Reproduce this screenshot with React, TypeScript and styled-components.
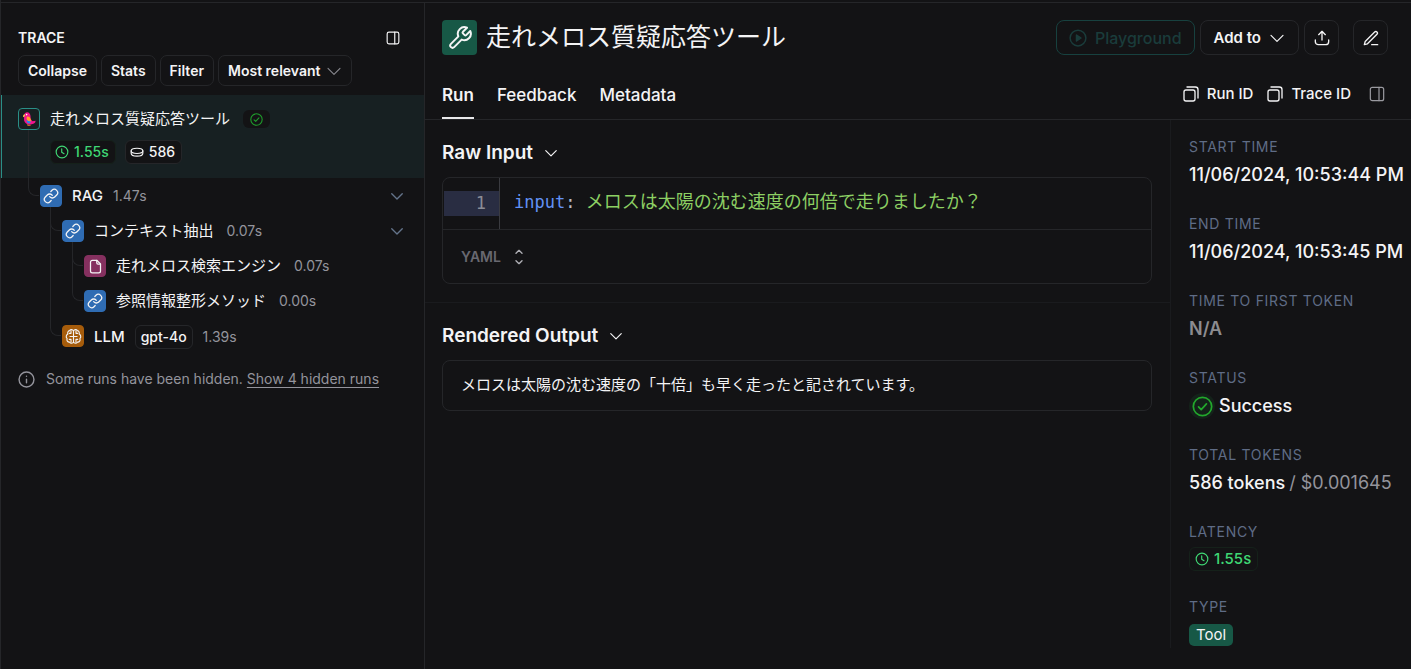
import React from 'react';
import styled, { createGlobalStyle } from 'styled-components';

const c = {
  bg: '#131315',
  line: '#252629',
  faint: '#1a1b1e',
  text: '#f4f4f5',
  muted: '#94949c',
  slate: '#5f6c86',
  green: '#3fd774',
  teal: '#2a8f87',
};

const GlobalStyle = createGlobalStyle`
  *, *::before, *::after { box-sizing: border-box; }
  body {
    margin: 0;
    background: ${c.bg};
    color: ${c.text};
    font-family: Inter, "Noto Sans CJK JP", sans-serif;
    font-size: 15px;
    line-height: 22px;
  }
  button, select { font: inherit; color: inherit; }
  h1, h2, dl, dd, p, ul { margin: 0; padding: 0; }
  ul { list-style: none; }
`;

/* ---------- icons ---------- */

type IconProps = { size?: number; stroke?: number; color?: string; children?: React.ReactNode };

const Svg = styled.svg`
  display: block;
  flex: none;
`;

const Icon = ({ size = 16, stroke = 2, color = 'currentColor', children }: IconProps) => (
  <Svg
    width={size}
    height={size}
    viewBox="0 0 24 24"
    fill="none"
    stroke={color}
    strokeWidth={stroke}
    strokeLinecap="round"
    strokeLinejoin="round"
    aria-hidden="true"
  >
    {children}
  </Svg>
);

const PanelIcon = (p: IconProps) => (
  <Icon {...p}>
    <rect x="2" y="2" width="20" height="20" rx="3" />
    <path d="M15 2v20" />
  </Icon>
);

const ChevronIcon = (p: IconProps) => (
  <Icon {...p}>
    <path d="M3 8l9 9 9-9" />
  </Icon>
);

const ClockIcon = (p: IconProps) => (
  <Icon {...p}>
    <circle cx="12" cy="12" r="10" />
    <path d="M11.500 6.500v6l4 2.500" />
  </Icon>
);

const CheckCircleIcon = (p: IconProps) => (
  <Icon {...p}>
    <circle cx="12" cy="12" r="10.500" />
    <path d="M7.500 12.500l3 3 6-6.500" />
  </Icon>
);

const CoinsIcon = (p: IconProps) => (
  <Icon {...p}>
    <ellipse cx="12" cy="10" rx="10" ry="4.500" />
    <path d="M2 10v4c0 2.800 4.500 5 10 5s10-2.200 10-5v-4" />
  </Icon>
);

const LinkIcon = (p: IconProps) => (
  <Icon {...p}>
    <path d="M10 13a5 5 0 0 0 7.540.540l3-3a5 5 0 0 0-7.070-7.070l-1.720 1.710" />
    <path d="M14 11a5 5 0 0 0-7.540-.540l-3 3a5 5 0 0 0 7.070 7.070l1.710-1.710" />
  </Icon>
);

const FileIcon = (p: IconProps) => (
  <Icon {...p}>
    <path d="M14 2H7a3 3 0 0 0-3 3v14a3 3 0 0 0 3 3h10a3 3 0 0 0 3-3V8z" />
    <path d="M14 2v4a2 2 0 0 0 2 2h4" />
  </Icon>
);

const BrainIcon = (p: IconProps) => (
  <Icon {...p}>
    <path d="M12 4v16M12 4.500a3 3 0 0 0-5.500-.800A3.500 3.500 0 0 0 4 8.500a4 4 0 0 0-1 6.500 3.500 3.500 0 0 0 3.500 5A3 3 0 0 0 12 19.500a3 3 0 0 0 5.500.500 3.500 3.500 0 0 0 3.500-5 4 4 0 0 0-1-6.500 3.500 3.500 0 0 0-2.500-4.800A3 3 0 0 0 12 4.500" />
    <path d="M8.500 4v3.500H6M8.500 20v-4H6M12 12H7M15.500 4v3.500H18M15.500 20v-4H18M12 12h5" />
  </Icon>
);

const WrenchIcon = (p: IconProps) => (
  <Icon {...p}>
    <path d="M14.700 6.300a1 1 0 0 0 0 1.400l1.600 1.600a1 1 0 0 0 1.400 0l3.770-3.770a6 6 0 0 1-7.940 7.940l-6.910 6.910a2.120 2.120 0 0 1-3-3l6.910-6.910a6 6 0 0 1 7.940-7.940l-3.760 3.760z" />
  </Icon>
);

const PlayIcon = (p: IconProps) => (
  <Icon {...p}>
    <circle cx="12" cy="12" r="10.500" />
    <path d="M10 8l6 4-6 4z" fill="currentColor" />
  </Icon>
);

const UploadIcon = (p: IconProps) => (
  <Icon {...p}>
    <path d="M2 15v2.500A4.500 4.500 0 0 0 6.500 22h11a4.500 4.500 0 0 0 4.500-4.500V15" />
    <path d="M12 15V2M7 7l5-5 5 5" />
  </Icon>
);

const EditIcon = (p: IconProps) => (
  <Icon {...p}>
    <path d="M13 22h9" />
    <path d="M2 22l1.300-4.700L17.500 3a2.300 2.300 0 0 1 3.400 3.400L6.700 20.700z" />
  </Icon>
);

const CopyIcon = (p: IconProps) => (
  <Icon {...p}>
    <rect x="1.500" y="6" width="16.500" height="16.500" rx="3" />
    <path d="M6 1.500h12.500a4 4 0 0 1 4 4V18" />
  </Icon>
);

const InfoIcon = (p: IconProps) => (
  <Icon {...p}>
    <circle cx="12" cy="12" r="10.500" />
    <path d="M12 11.500v5M12 7.500v.010" />
  </Icon>
);

const SortIcon = (p: IconProps) => (
  <Icon {...p}>
    <path d="M7.500 6.500L12 2l4.500 4.500M7.500 17.500L12 22l4.500-4.500" />
  </Icon>
);

const ParrotIcon = () => (
  <Svg width="14" height="14" viewBox="0 0 14 14" aria-hidden="true">
    <path d="M2.200 3.500C2.200 1.400 3.600.300 5.200.300c1.800 0 3 1.300 3.200 3.200.200 1.500.300 2.500.100 3.500l2 2.300 3-.500c.400 1.700-1.400 3.200-3.700 3.500-1.200.600-2.600.600-3.800.200C3.300 11.700 1.700 9 2 6.500z" fill="#f2148c" />
    <path d="M2.800 2.200C1.300 2.400.700 3.800 1.200 5.300l2-1.200z" fill="#ffc04a" />
    <path d="M5 4.600c2.300-.300 4.300 1.500 4 5L5.800 9C4.500 8 4.200 6 5 4.600z" fill="#ff9f2a" />
    <path d="M4.500 7.800c1 1.200 2.500 1.700 4.500 1.700l-1.300 2c-2 .200-3.400-1.500-3.200-3.700z" fill="#1f8df0" />
    <path d="M5.800 12v1.600h2.800" stroke="#c9741f" strokeWidth="1" fill="none" />
    <circle cx="4.600" cy="2.600" r=".800" fill="#fff" />
  </Svg>
);

/* ---------- frame ---------- */

const Frame = styled.div`
  display: flex;
  min-height: 100vh;
  border-left: 1px solid ${c.line};
  background: linear-gradient(${c.line}, ${c.line}) 0 2px / 100% 1px no-repeat;
  padding-top: 3px;
`;

const Sidebar = styled.aside`
  flex: 0 0 30%;
  min-width: 0;
`;

const Main = styled.main`
  flex: 1;
  min-width: 0;
  display: flex;
  flex-direction: column;
  border-left: 1px solid ${c.line};
`;

/* ---------- sidebar ---------- */

const SidebarHead = styled.div`
  display: flex;
  align-items: center;
  justify-content: space-between;
  padding: 24px 24px 0 17px;
`;

const SidebarTitle = styled.h2`
  font-size: 14px;
  font-weight: 600;
`;

const IconButton = styled.button<{ $dim?: boolean; $apart?: boolean }>`
  display: flex;
  padding: 0;
  border: 0;
  background: none;
  color: ${(p) => (p.$dim ? '#9a9aa0' : c.text)};
  cursor: pointer;
  ${(p) => p.$apart && 'margin-left: 4px;'}
`;

const Filters = styled.div`
  display: flex;
  gap: 4px;
  padding: 6px 17px 9px;
`;

const SmallButton = styled.button`
  display: flex;
  align-items: center;
  gap: 6px;
  height: 31px;
  padding: 0 9px;
  border: 1px solid ${c.line};
  border-radius: 7px;
  background: none;
  font-size: 14px;
  font-weight: 600;
  white-space: nowrap;
  cursor: pointer;
`;

const TreeRow = styled.li<{ $selected?: boolean }>`
  display: flex;
  min-height: ${(p) => (p.$selected ? 83 : 35)}px;
  padding: 0 20px 0 17px;
  ${(p) =>
    p.$selected &&
    `padding-left: 16px; border-left: 1px solid ${c.teal}; background: #172022;`}
`;

const Guide = styled.span<{ $through?: boolean }>`
  flex: none;
  width: 12px;
  margin-left: 10px;
  border-left: 1px solid ${(p) => (p.$through ? c.line : 'transparent')};
`;

const Elbow = styled.span`
  display: block;
  width: 11px;
  height: 18px;
  margin-left: -1px;
  border: solid ${c.line};
  border-width: 0 0 1px 1px;
  border-bottom-left-radius: 8px;
`;

const NodeColumn = styled.span<{ $top: number }>`
  flex: none;
  display: flex;
  flex-direction: column;
  width: 22px;
  padding-top: ${(p) => p.$top}px;
`;

const Stub = styled.span`
  flex: 1;
  margin-left: 10px;
  border-left: 1px solid ${c.line};
`;

const NodeIcon = styled.span<{ $bg: string; $border?: string }>`
  flex: none;
  display: flex;
  align-items: center;
  justify-content: center;
  width: 22px;
  height: 22px;
  border: 1px solid ${(p) => p.$border ?? p.$bg};
  border-radius: 4px;
  background: ${(p) => p.$bg};
`;

const NodeBody = styled.span<{ $top: number }>`
  flex: 1;
  padding: ${(p) => p.$top}px 0 0 10px;
`;

const NodeLine = styled.span`
  display: flex;
  align-items: center;
  gap: 10px;
  white-space: nowrap;
`;

const NodeName = styled.span`
  font-weight: 500;
  &:lang(ja) { font-weight: 400; padding-right: 3px; }
`;

const NodeTime = styled.span`
  font-size: 14px;
  color: ${c.muted};
`;

const Spacer = styled.span`
  flex: 1;
`;

const StatusBadge = styled.span`
  display: flex;
  align-items: center;
  justify-content: center;
  width: 27px;
  height: 18px;
  border-radius: 6px;
  background: ${c.bg};
`;

const Pills = styled.span`
  display: flex;
  gap: 9px;
  padding-top: 10px;
`;

const Pill = styled.span<{ $tone?: 'green' }>`
  display: inline-flex;
  align-items: center;
  gap: 5px;
  height: 24px;
  padding: 0 6px 0 4px;
  border: 1px solid ${(p) => (p.$tone === 'green' ? '#15211a' : c.line)};
  border-radius: 6px;
  background: ${c.bg};
  color: ${(p) => (p.$tone === 'green' ? c.green : c.text)};
  font-size: 14px;
  font-weight: 500;
`;

const ModelTag = styled.span`
  height: 24px;
  padding: 0 5px;
  border: 1px solid ${c.line};
  border-radius: 6px;
  font-size: 14px;
  font-weight: 500;
`;

const HiddenNote = styled.p`
  display: flex;
  align-items: center;
  gap: 11px;
  padding: 15px 17px 0;
  font-size: 14px;
  color: ${c.muted};
  white-space: nowrap;
`;

const NoteLink = styled.a`
  color: inherit;
  text-underline-offset: 3px;
`;

/* ---------- header ---------- */

const Header = styled.header`
  border-bottom: 1px solid ${c.line};
`;

const TitleBar = styled.div`
  display: flex;
  align-items: center;
  gap: 9px;
  padding: 17px 23px 0 17px;
`;

const ToolBadge = styled.span`
  flex: none;
  display: flex;
  align-items: center;
  justify-content: center;
  width: 35px;
  height: 35px;
  border-radius: 4px;
  background: #175846;
`;

const Title = styled.h1`
  flex: 1;
  font-size: 25px;
  line-height: 35px;
  font-weight: 400;
`;

const Actions = styled.div`
  display: flex;
  gap: 5px;
`;

const ActionButton = styled.button<{ $square?: boolean; $apart?: boolean }>`
  display: flex;
  align-items: center;
  justify-content: center;
  gap: 8px;
  height: 35px;
  ${(p) => (p.$square ? 'width: 35px; padding: 0;' : 'padding: 0 13px;')}
  ${(p) => p.$apart && 'margin-left: 9px;'}
  border: 1px solid ${c.line};
  border-radius: 8px;
  background: none;
  font-weight: 600;
  cursor: pointer;
  &:disabled {
    padding: 0 12px;
    border-color: #17413f;
    color: #1a3c3b;
    font-size: 16px;
    font-weight: 500;
    cursor: default;
  }
`;

const TabBar = styled.div`
  display: flex;
  align-items: stretch;
  justify-content: space-between;
  height: 64px;
  padding: 15px 26px 0 17px;
`;

const Tabs = styled.div`
  display: flex;
  gap: 23px;
`;

const Tab = styled.button<{ $active?: boolean }>`
  padding: 2px 0 0;
  border: 0;
  border-bottom: 2px solid ${(p) => (p.$active ? '#e8e8ea' : 'transparent')};
  background: none;
  font-size: 17px;
  font-weight: ${(p) => (p.$active ? 600 : 500)};
  cursor: pointer;
`;

const Ids = styled.div`
  display: flex;
  align-items: center;
  gap: 14px;
  padding-bottom: 2px;
`;

const IdButton = styled.button`
  display: flex;
  align-items: center;
  gap: 8px;
  padding: 0;
  border: 0;
  background: none;
  font-weight: 500;
  cursor: pointer;
`;

/* ---------- content ---------- */

const Content = styled.div`
  flex: 1;
  display: flex;
  align-items: flex-start;
`;

const Sections = styled.div`
  flex: 1;
  min-width: 0;
`;

const Section = styled.section`
  padding: 18px 18px 18px 17px;
  & + & { border-top: 1px solid ${c.faint}; }
`;

const SectionTitle = styled.h2`
  display: flex;
  align-items: center;
  gap: 11px;
  margin-bottom: 9px;
  font-size: 19px;
  line-height: 30px;
  font-weight: 600;
`;

const Card = styled.div`
  border: 1px solid ${c.line};
  border-radius: 8px;
  overflow: hidden;
`;

const Code = styled.pre`
  display: flex;
  align-items: stretch;
  margin: 0;
  font-family: "DejaVu Sans Mono", "Noto Sans CJK JP", monospace;
  font-size: 17px;
  line-height: 25px;
`;

const Gutter = styled.span`
  flex: none;
  width: 57px;
  padding: 13px 0 13px 1px;
  border-right: 1px solid #3a3b40;
`;

const LineNumber = styled.span`
  display: block;
  padding-right: 13px;
  background: #292d42;
  color: #8b8d96;
  text-align: right;
`;

const CodeLine = styled.code`
  display: flex;
  padding: 12px 14px 14px;
  font-family: inherit;
  min-width: 0;
`;

const Key = styled.span`
  color: #6292f5;
`;

const Punct = styled.span`
  color: #b8bccb;
`;

const Scalar = styled.span`
  font-size: 18px;
  line-height: 24px;
  color: #8ccf63;
`;

const FormatBar = styled.label`
  display: flex;
  align-items: center;
  gap: 10px;
  height: 54px;
  padding: 0 18px;
  border-top: 1px solid ${c.line};
  color: #b0b0b6;
`;

const FormatSelect = styled.select`
  appearance: none;
  padding: 0;
  border: 0;
  background: none;
  color: #686870;
  font-size: 14px;
  font-weight: 600;
`;

const Output = styled.p`
  padding: 13px 18px 14px;
`;

/* ---------- details ---------- */

const Details = styled.dl`
  flex: 0 0 241px;
  display: flex;
  flex-direction: column;
  gap: 27px;
  padding: 18px 0 0 18px;
  border-left: 1px solid ${c.faint};
`;

const Label = styled.dt`
  margin-bottom: 6px;
  font-size: 14px;
  line-height: 18px;
  letter-spacing: 0.05em;
  color: ${c.slate};
`;

const Value = styled.dd<{ $compact?: boolean; $dim?: boolean }>`
  display: flex;
  align-items: center;
  gap: 4px;
  height: ${(p) => (p.$compact ? 24 : 26)}px;
  font-size: 18px;
  font-weight: ${(p) => (p.$dim ? 600 : 500)};
  white-space: nowrap;
  color: ${(p) => (p.$dim ? '#8c8c90' : c.text)};
`;

const Cost = styled.span`
  color: ${c.muted};
  font-weight: 400;
`;

const SuccessMark = styled.span`
  display: flex;
  align-items: center;
  justify-content: center;
  width: 26px;
  height: 26px;
  border-radius: 50%;
  background: #14221a;
`;

const LargePill = styled(Pill)`
  padding: 0 6px 0 5px;
  font-size: 15px;
`;

const TypeBadge = styled.span`
  padding: 0 7px;
  border-radius: 5px;
  background: #175846;
  font-size: 15px;
  font-weight: 400;
`;

/* ---------- data ---------- */

type GuideKind = 'none' | 'line' | 'elbow' | 'tee';
type Kind = 'chain' | 'retriever' | 'llm';

const kinds: Record<Kind, { bg: string; icon: React.ReactNode }> = {
  chain: { bg: '#2f6cb3', icon: <LinkIcon size={16} stroke={1.9} /> },
  retriever: { bg: '#85305f', icon: <FileIcon size={15} /> },
  llm: { bg: '#a65c0b', icon: <BrainIcon size={17} stroke={1.6} /> },
};

const nodes: {
  name: string;
  ja?: boolean;
  time: string;
  kind: Kind;
  guides: GuideKind[];
  open?: boolean;
  model?: string;
}[] = [
  { name: 'RAG', time: '1.47s', kind: 'chain', guides: ['elbow'], open: true },
  { name: 'コンテキスト抽出', ja: true, time: '0.07s', kind: 'chain', guides: ['none', 'tee'], open: true },
  { name: '走れメロス検索エンジン', ja: true, time: '0.07s', kind: 'retriever', guides: ['none', 'line', 'tee'] },
  { name: '参照情報整形メソッド', ja: true, time: '0.00s', kind: 'chain', guides: ['none', 'line', 'elbow'] },
  { name: 'LLM', time: '1.39s', kind: 'llm', guides: ['none', 'elbow'], model: 'gpt-4o' },
];

export default function App() {
  return (
    <>
      <GlobalStyle />
      <Frame>
        <Sidebar>
          <SidebarHead>
            <SidebarTitle>TRACE</SidebarTitle>
            <IconButton aria-label="Toggle trace panel">
              <PanelIcon size={14} />
            </IconButton>
          </SidebarHead>
          <Filters>
            <SmallButton>Collapse</SmallButton>
            <SmallButton>Stats</SmallButton>
            <SmallButton>Filter</SmallButton>
            <SmallButton>
              Most relevant
              <ChevronIcon size={16} stroke={1.6} color="#8a8a90" />
            </SmallButton>
          </Filters>
          <ul>
            <TreeRow $selected>
              <NodeColumn $top={13}>
                <NodeIcon $bg="#172022" $border={c.teal}>
                  <ParrotIcon />
                </NodeIcon>
                <Stub />
              </NodeColumn>
              <NodeBody $top={13}>
                <NodeLine>
                  <NodeName lang="ja">走れメロス質疑応答ツール</NodeName>
                  <StatusBadge>
                    <CheckCircleIcon size={13} color="#1f9d2c" />
                  </StatusBadge>
                </NodeLine>
                <Pills>
                  <Pill $tone="green">
                    <ClockIcon size={14} />
                    1.55s
                  </Pill>
                  <Pill>
                    <CoinsIcon size={14} />
                    586
                  </Pill>
                </Pills>
              </NodeBody>
            </TreeRow>
            {nodes.map((n) => (
              <TreeRow key={n.name}>
                {n.guides.map((g, i) => (
                  <Guide key={i} $through={g === 'line' || g === 'tee'}>
                    {(g === 'elbow' || g === 'tee') && <Elbow />}
                  </Guide>
                ))}
                <NodeColumn $top={7}>
                  <NodeIcon $bg={kinds[n.kind].bg}>{kinds[n.kind].icon}</NodeIcon>
                  {n.open && <Stub />}
                </NodeColumn>
                <NodeBody $top={7}>
                  <NodeLine>
                    <NodeName lang={n.ja ? 'ja' : undefined}>{n.name}</NodeName>
                    {n.model && <ModelTag>{n.model}</ModelTag>}
                    <NodeTime>{n.time}</NodeTime>
                    <Spacer />
                    {n.open && (
                      <IconButton aria-label={`Collapse ${n.name}`}>
                        <ChevronIcon size={14} stroke={2.3} color="#64748b" />
                      </IconButton>
                    )}
                  </NodeLine>
                </NodeBody>
              </TreeRow>
            ))}
          </ul>
          <HiddenNote>
            <InfoIcon size={17} />
            <span>
              Some runs have been hidden. <NoteLink href="#hidden">Show 4 hidden runs</NoteLink>
            </span>
          </HiddenNote>
        </Sidebar>

        <Main>
          <Header>
            <TitleBar>
              <ToolBadge>
                <WrenchIcon size={26} stroke={1.8} />
              </ToolBadge>
              <Title lang="ja">走れメロス質疑応答ツール</Title>
              <Actions>
                <ActionButton disabled>
                  <PlayIcon size={18} />
                  Playground
                </ActionButton>
                <ActionButton>
                  Add to
                  <ChevronIcon size={16} stroke={1.8} />
                </ActionButton>
                <ActionButton $square aria-label="Share">
                  <UploadIcon size={16} />
                </ActionButton>
                <ActionButton $square $apart aria-label="Annotate">
                  <EditIcon size={16} />
                </ActionButton>
              </Actions>
            </TitleBar>
            <TabBar>
              <Tabs role="tablist">
                <Tab $active role="tab" aria-selected>
                  Run
                </Tab>
                <Tab role="tab">Feedback</Tab>
                <Tab role="tab">Metadata</Tab>
              </Tabs>
              <Ids>
                <IdButton>
                  <CopyIcon size={16} />
                  Run ID
                </IdButton>
                <IdButton>
                  <CopyIcon size={16} />
                  Trace ID
                </IdButton>
                <IconButton $dim $apart aria-label="Toggle details panel">
                  <PanelIcon size={16} stroke={1.8} />
                </IconButton>
              </Ids>
            </TabBar>
          </Header>

          <Content>
            <Sections>
              <Section>
                <SectionTitle>
                  Raw Input
                  <ChevronIcon size={14} />
                </SectionTitle>
                <Card>
                  <Code>
                    <Gutter>
                      <LineNumber>1</LineNumber>
                    </Gutter>
                    <CodeLine lang="ja">
                      <Key>input</Key>
                      <Punct>: </Punct>
                      <Scalar>メロスは太陽の沈む速度の何倍で走りましたか？</Scalar>
                    </CodeLine>
                  </Code>
                  <FormatBar>
                    <FormatSelect aria-label="Format" defaultValue="YAML">
                      <option>YAML</option>
                    </FormatSelect>
                    <SortIcon size={16} />
                  </FormatBar>
                </Card>
              </Section>
              <Section>
                <SectionTitle>
                  Rendered Output
                  <ChevronIcon size={14} />
                </SectionTitle>
                <Card>
                  <Output lang="ja">メロスは太陽の沈む速度の「十倍」も早く走ったと記されています。</Output>
                </Card>
              </Section>
            </Sections>

            <Details>
              <div>
                <Label>START TIME</Label>
                <Value>11/06/2024, 10:53:44 PM</Value>
              </div>
              <div>
                <Label>END TIME</Label>
                <Value>11/06/2024, 10:53:45 PM</Value>
              </div>
              <div>
                <Label>TIME TO FIRST TOKEN</Label>
                <Value $dim>N/A</Value>
              </div>
              <div>
                <Label>STATUS</Label>
                <Value>
                  <SuccessMark>
                    <CheckCircleIcon size={21} color="#22a82c" />
                  </SuccessMark>
                  Success
                </Value>
              </div>
              <div>
                <Label>TOTAL TOKENS</Label>
                <Value>
                  586 tokens <Cost>/ $0.001645</Cost>
                </Value>
              </div>
              <div>
                <Label>LATENCY</Label>
                <Value $compact>
                  <LargePill $tone="green">
                    <ClockIcon size={14} />
                    1.55s
                  </LargePill>
                </Value>
              </div>
              <div>
                <Label>TYPE</Label>
                <Value>
                  <TypeBadge>Tool</TypeBadge>
                </Value>
              </div>
            </Details>
          </Content>
        </Main>
      </Frame>
    </>
  );
}
